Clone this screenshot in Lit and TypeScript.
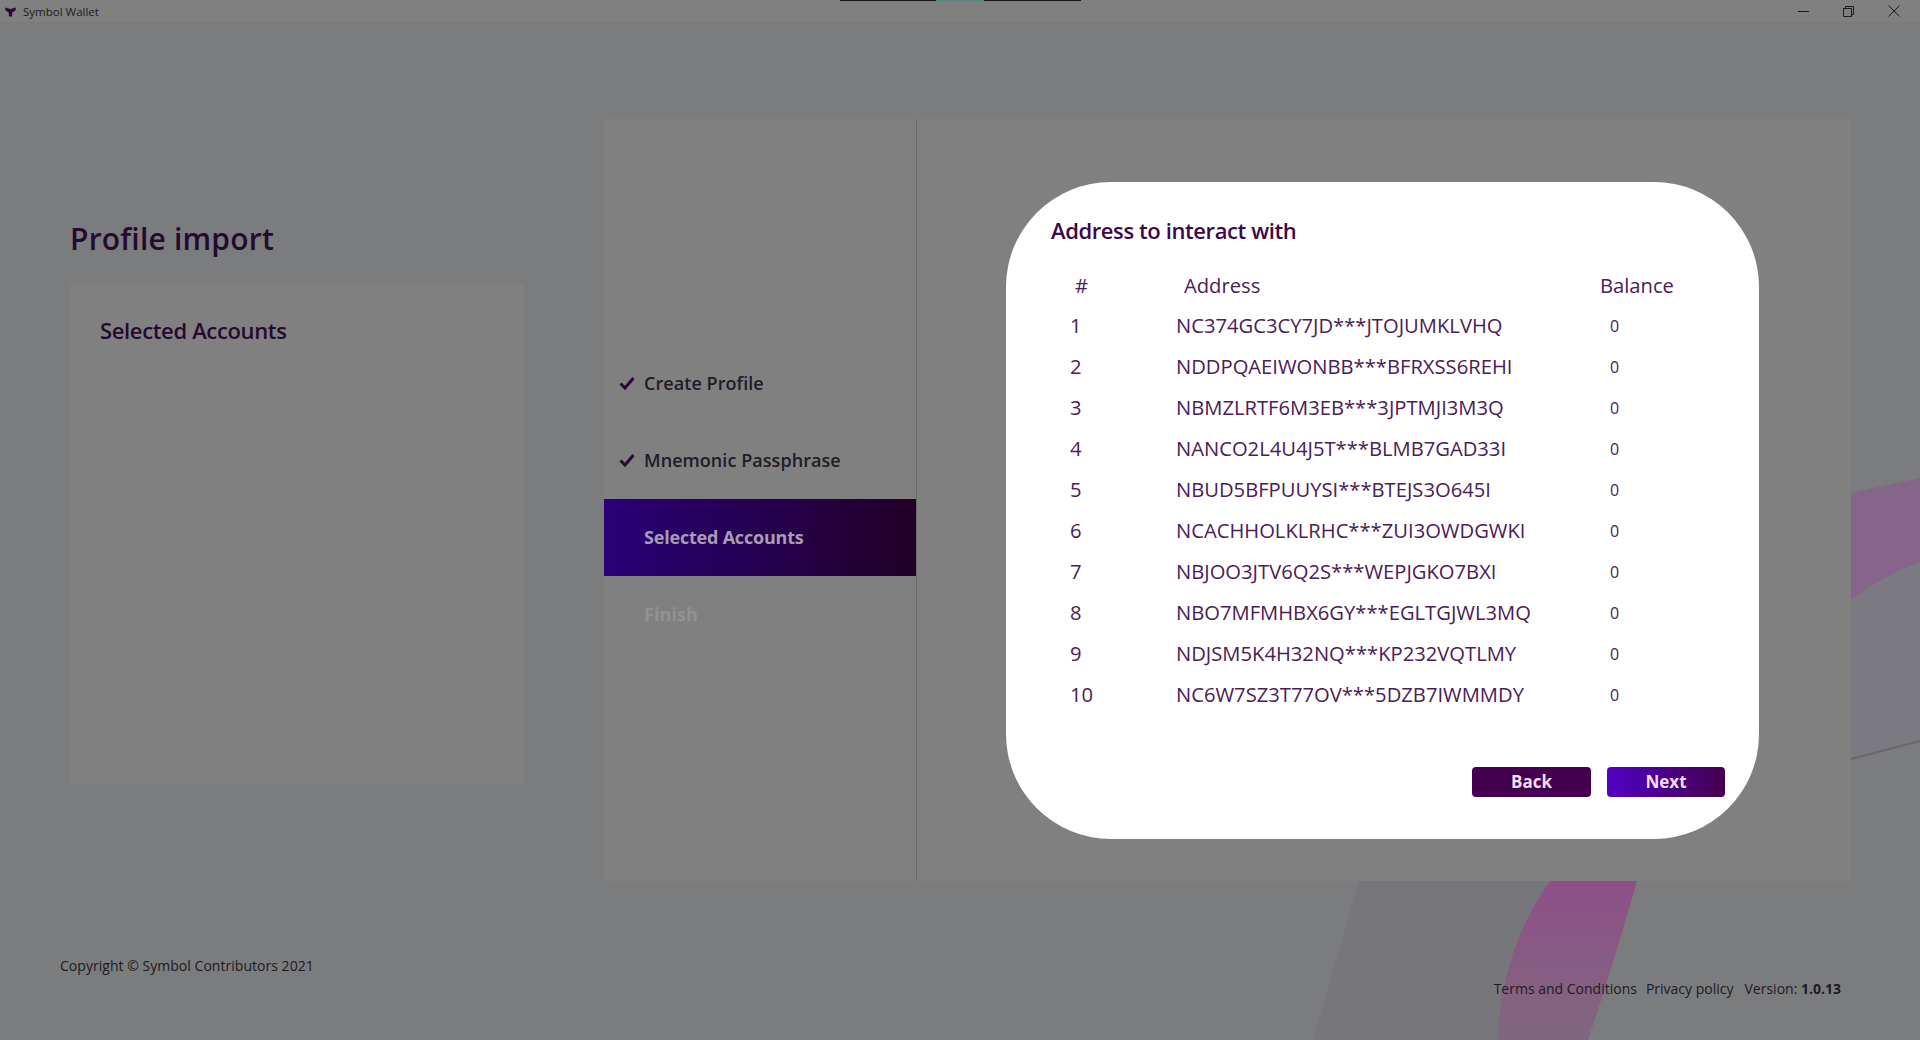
import { LitElement, html, css, svg } from 'lit';
import { customElement } from 'lit/decorators.js';

const ACCOUNTS = [
  'NC374GC3CY7JD***JTOJUMKLVHQ',
  'NDDPQAEIWONBB***BFRXSS6REHI',
  'NBMZLRTF6M3EB***3JPTMJI3M3Q',
  'NANCO2L4U4J5T***BLMB7GAD33I',
  'NBUD5BFPUUYSI***BTEJS3O645I',
  'NCACHHOLKLRHC***ZUI3OWDGWKI',
  'NBJOO3JTV6Q2S***WEPJGKO7BXI',
  'NBO7MFMHBX6GY***EGLTGJWL3MQ',
  'NDJSM5K4H32NQ***KP232VQTLMY',
  'NC6W7SZ3T77OV***5DZB7IWMMDY',
];

const check = html`<svg class="check" viewBox="0 0 16 14" width="16" height="14">
  <path d="M1.5 7.5 L6 12 L14.5 2" fill="none" stroke="#2a0a33" stroke-width="3"/>
</svg>`;

// decorative wave behind the panels
const backdrop = svg`
  <defs>
    <linearGradient id="pink" x1="0" y1="0" x2="0" y2="1">
      <stop offset="0" stop-color="#8f4f88"/>
      <stop offset="1" stop-color="#7f687f"/>
    </linearGradient>
  </defs>
  <path d="M1359 881 L1550 881 Q1510 930 1497 1040 L1313 1040 Z" fill="#77767b"/>
  <path d="M1550 881 L1637 881 Q1610 975 1588 1040 L1497 1040 Q1503 945 1550 881 Z" fill="url(#pink)"/>
  <path d="M1851 493 L1920 478 L1920 563 Q1890 572 1851 600 Z" fill="#85658a"/>
  <path d="M1851 600 Q1890 572 1920 563 L1920 740 L1851 758 Z" fill="#7b7a80"/>
  <path d="M1851 759 L1920 741" stroke="#6c6570" stroke-width="2" fill="none"/>
`;

@customElement('app-root')
export class AppRoot extends LitElement {
  static styles = css`
    :host {
      display: block;
      position: relative;
      width: 1920px;
      height: 1040px;
      overflow: hidden;
      background: #7b7c7e;
      font-family: 'Open Sans', 'Noto Sans', sans-serif;
      color: #250a2e;
    }

    .backdrop {
      position: absolute;
      inset: 0;
    }

    .titlebar {
      position: relative;
      height: 22px;
      background: #808080;
      display: flex;
      align-items: center;
      padding-left: 5px;
      gap: 7px;
      font-size: 11.5px;
      color: #1f1a22;
    }

    .notch {
      position: absolute;
      top: 0;
      left: 840px;
      width: 241px;
      height: 1px;
      background: #151515;
    }

    .notch span {
      display: block;
      margin-left: 96px;
      width: 48px;
      height: 1px;
      background: #5f8486;
    }

    .winbtns {
      margin-left: auto;
      display: flex;
      align-items: center;
      gap: 34px;
      padding-right: 20px;
    }

    .main {
      position: relative;
      display: flex;
      height: 762px;
      margin-top: 97px;
      padding-left: 70px;
    }

    .left {
      width: 454px;
      margin-right: 80px;
      padding-top: 97px;
    }

    h1 {
      margin: 0;
      height: 68px;
      font-size: 30px;
      line-height: 45px;
      font-weight: 600;
      letter-spacing: 0.2px;
    }

    .left-card {
      height: 500px;
      box-sizing: border-box;
      padding: 30px;
      background: #808080;
      font-size: 22px;
      line-height: 32px;
      font-weight: 600;
      letter-spacing: -0.35px;
    }

    .wizard {
      display: flex;
      width: 1247px;
      background: #808080;
    }

    .steps {
      width: 312px;
      padding-top: 226px;
      border-right: 1px solid #68686a;
    }

    .step {
      position: relative;
      height: 77px;
      display: flex;
      align-items: center;
      padding: 0 0 1px 40px;
      box-sizing: border-box;
      font-size: 18px;
      font-weight: 600;
      letter-spacing: 0.06px;
      color: #221a28;
    }

    .step.active {
      background: linear-gradient(90deg, #2a0078, #220027);
      color: #a99bb2;
      font-weight: 700;
      letter-spacing: -0.2px;
    }

    .step.pending {
      color: #929292;
      font-weight: 700;
    }

    .check {
      position: absolute;
      left: 15px;
      top: 31px;
    }

    .footer {
      position: relative;
      display: flex;
      justify-content: space-between;
      padding: 75px 79px 0 60px;
      font-size: 14px;
      color: #1e1a22;
    }

    .copyright {
      line-height: 20px;
      letter-spacing: 0.03px;
    }

    .links {
      display: flex;
      gap: 9px;
      padding-top: 23px;
      line-height: 20px;
    }

    .links b {
      font-weight: 700;
    }

    .version {
      margin-left: 2px;
    }

    .modal {
      position: absolute;
      left: 1006px;
      top: 182px;
      width: 753px;
      height: 657px;
      box-sizing: border-box;
      padding: 31px 34px 42px 45px;
      display: flex;
      flex-direction: column;
      background: #fff;
      border-radius: 105px;
      color: #3c0846;
    }

    h2 {
      margin: 0 0 18px;
      font-size: 22px;
      line-height: 34px;
      font-weight: 600;
      letter-spacing: -0.4px;
    }

    .row {
      display: grid;
      grid-template-columns: 106px 424px 1fr;
      height: 41px;
      align-items: center;
      margin-left: 19px;
      font-size: 20.2px;
      color: #4a2055;
    }

    .row.head {
      height: 39.5px;
      padding-bottom: 0;
    }

    .row.head > :nth-child(1) {
      padding-left: 5px;
    }

    .row.head > :nth-child(2) {
      padding-left: 8px;
    }

    .balance {
      padding: 2px 0 0 10px;
      font-size: 16px;
    }

    .actions {
      margin-top: auto;
      display: flex;
      justify-content: flex-end;
      gap: 16px;
    }

    button {
      width: 119px;
      height: 30px;
      padding: 0 0 2px;
      border: 0;
      border-radius: 4px;
      font: 700 17px 'Open Sans', sans-serif;
      color: #f3dff5;
      background: #44004e;
    }

    button.primary {
      width: 118px;
      background: linear-gradient(90deg, #5200c6, #44004e);
    }
  `;

  render() {
    return html`
      <svg class="backdrop" viewBox="0 0 1920 1040" width="1920" height="1040">${backdrop}</svg>

      <div class="titlebar">
        <svg viewBox="0 0 12 12" width="11" height="11">
          <path d="M0 1.5 L6 3.4 L12 1.5 L11.4 5 L8 7 L7.6 11.5 L4.4 11.5 L4 7 L0.6 5 Z" fill="#2a0a3a"/>
        </svg>
        <span>Symbol Wallet</span>
        <div class="notch"><span></span></div>
        <div class="winbtns">
          <svg viewBox="0 0 11 11" width="11" height="11"><path d="M0 5.5 H11" stroke="#1c1c1c"/></svg>
          <svg viewBox="0 0 11 11" width="11" height="11">
            <path d="M0.5 2.5 H8.5 V10.5 H0.5 Z M2.5 2.5 V0.5 H10.5 V8.5 H8.5" fill="none" stroke="#1c1c1c"/>
          </svg>
          <svg viewBox="0 0 12 12" width="12" height="12"><path d="M0.5 0.5 L11.5 11.5 M11.5 0.5 L0.5 11.5" stroke="#1c1c1c"/></svg>
        </div>
      </div>

      <div class="main">
        <div class="left">
          <h1>Profile import</h1>
          <div class="left-card">Selected Accounts</div>
        </div>
        <div class="wizard">
          <div class="steps">
            <div class="step">${check}Create Profile</div>
            <div class="step">${check}Mnemonic Passphrase</div>
            <div class="step active">Selected Accounts</div>
            <div class="step pending">Finish</div>
          </div>
        </div>
      </div>

      <div class="footer">
        <div class="copyright">Copyright © Symbol Contributors 2021</div>
        <div class="links">
          <span>Terms and Conditions</span>
          <span>Privacy policy</span>
          <span class="version">Version: <b>1.0.13</b></span>
        </div>
      </div>

      <div class="modal">
        <h2>Address to interact with</h2>
        <div class="row head"><span>#</span><span>Address</span><span>Balance</span></div>
        ${ACCOUNTS.map(
          (addr, i) => html`<div class="row">
            <span>${i + 1}</span><span>${addr}</span><span class="balance">0</span>
          </div>`,
        )}
        <div class="actions">
          <button>Back</button>
          <button class="primary">Next</button>
        </div>
      </div>
    `;
  }
}
